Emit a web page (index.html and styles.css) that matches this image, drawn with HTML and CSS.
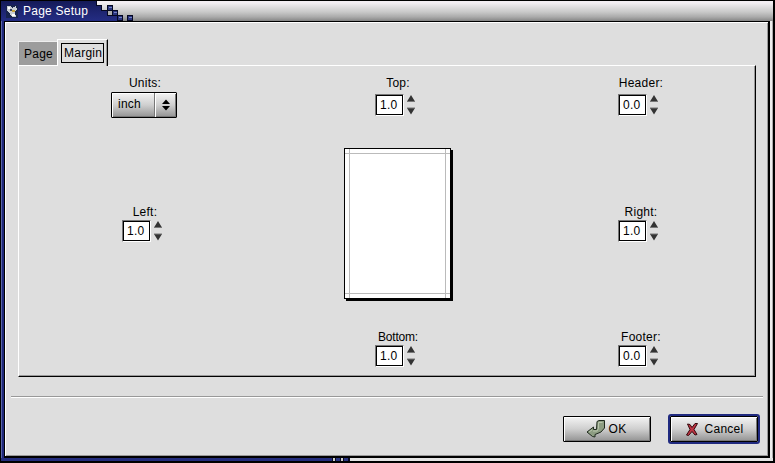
FILE: index.html
```html
<!DOCTYPE html>
<html lang="en">
<head>
<meta charset="utf-8">
<title>Page Setup</title>
<link rel="stylesheet" href="styles.css">
</head>
<body>
<svg class="defs" width="0" height="0" aria-hidden="true">
  <symbol id="arrows" viewBox="0 0 8 20">
    <path d="M4 0L8 6.500H0zM0 13H8L4 19.500z" fill="#333"/>
    <path d="M0 6.500H8M0 13H8" stroke="#777" stroke-width="1"/>
  </symbol>
</svg>
<div class="window">
  <header class="titlebar">
    <svg class="titleart" width="140" height="20" viewBox="1 1 140 20" shape-rendering="crispEdges">
      <defs><linearGradient id="blue" x1="0" y1="0" x2="0" y2="1"><stop offset="0" stop-color="#141a58"/><stop offset=".5" stop-color="#1d2470"/><stop offset="1" stop-color="#242d83"/></linearGradient></defs>
      <path d="M1 1H96V5H101V10H107V15H117V21H1z" fill="url(#blue)"/>
      <path d="M96.500 1V5.500H101.500V10.500H107.500V15.500H117.500V21" fill="none" stroke="#050822"/>
      <path d="M107.500 10.500h5v5h-5z" fill="#aaa" stroke="#050822"/>
      <g fill="#29347f" stroke="#050822">
        <path d="M107.500 5.500h5v5h-5zM112.500 10.500h5v5h-5zM117.500 15.500h5v5h-5zM127.500 15.500h5v5h-5z"/>
      </g>
      <path d="M109 7.500h3M114 12.500h3M119 17.500h3M129 17.500h3" stroke="#7783c0"/>
      <path d="M6 5H18V18H6z" fill="#17234e"/>
      <path d="M7 6h4l1 2 4-2 1 3-2 3 1 5h-4l-2-3-3-3z" fill="#c9ced3"/>
      <path d="M8 7h2v2H8zM12 14h3v2h-3z" fill="#fff"/><path d="M12 10h3v2h-3z" fill="#c5a33e"/><path d="M10 9h2v2h-2z" fill="#39435d"/>
    </svg>
    <span class="title">Page Setup</span>
  </header>
  <main class="client">
    <nav class="tabs"><div class="tab">Page</div><div class="tab active"><span>Margin</span></div></nav>
    <section class="panel">
      <div class="column units">
        <div class="field top"><label>Units:</label>
          <button class="select"><span>inch</span><svg width="20" height="22" viewBox="0 0 20 22"><path d="M6 10L10 5.500 14 10zM6 12H14L10 16.500z" fill="#000"/></svg></button>
        </div>
        <div class="field middle"><label>Left:</label><div class="spin"><span>1.0</span><svg width="8" height="20"><use href="#arrows"/></svg></div></div>
      </div>
      <div class="column center">
        <div class="field first"><label>Top:</label><div class="spin"><span>1.0</span><svg width="8" height="20"><use href="#arrows"/></svg></div></div>
        <div class="paper"><div class="guides"></div></div>
        <div class="field"><label class="bottom">Bottom:</label><div class="spin"><span>1.0</span><svg width="8" height="20"><use href="#arrows"/></svg></div></div>
      </div>
      <div class="column right">
        <div class="field top"><label>Header:</label><div class="spin"><span>0.0</span><svg width="8" height="20"><use href="#arrows"/></svg></div></div>
        <div class="field middle"><label>Right:</label><div class="spin"><span>1.0</span><svg width="8" height="20"><use href="#arrows"/></svg></div></div>
        <div class="field"><label>Footer:</label><div class="spin"><span>0.0</span><svg width="8" height="20"><use href="#arrows"/></svg></div></div>
      </div>
    </section>
    <hr>
    <footer class="actions">
      <button class="button ok"><svg width="20" height="18" viewBox="0 0 20 18"><path d="M11 1.500L13 .5H18.500V8L15 12 9 14.500V17L6.500 16.500 1 12 7.500 7V9.500H10.500z" fill="#8d9d82" stroke="#1f2a1d"/><path d="M12.500 2.500h4M12.500 2.500v6L11 11H7M3 12l3-2" fill="none" stroke="#b9c6ad"/></svg><span>OK</span></button>
      <span class="default"><button class="button"><svg width="14" height="15" viewBox="0 0 14 15"><path d="M2.500 2L5 2.500 7 5.500 10 1.500 12.500 1.500 9 7.500 12 12.500 10 13 7 9.500 3.500 13.500 1.500 13 5 7.500z" fill="#bd3442" stroke="#35090d"/></svg><span>Cancel</span></button></span>
    </footer>
  </main>
  <div class="bottom-edge"><svg width="18" height="3" shape-rendering="crispEdges"><path d="M0 0h18v3H0z" fill="#080a20"/><path d="M1 0h2v3H1zM9 0h2v3H9z" fill="#ccc"/><path d="M4 0h4v3H4zM12 0h4v3h-4z" fill="#29347f"/></svg></div>
</div>
</body>
</html>
```
FILE: styles.css
```css
* { box-sizing: border-box; }
body { margin: 0; font: 12px/14px "Liberation Sans", Arial, sans-serif; color: #000; letter-spacing: .25px; }
.defs { position: absolute; }
.window {
  width: 775px; height: 463px; display: flex; flex-direction: column;
  border: 1px solid #000; border-width: 1px 2px 2px 1px;
  background: linear-gradient(90deg, #5a66a8 0 1px, #20287a 1px 3px, #000 3px 4px, #ddd 4px 768px, #000 768px 769px, #eee 769px 771px, #aaa 771px);
}
.titlebar {
  height: 20px; flex: none; position: relative;
  background: linear-gradient(#f3eef3 0 2px, #e8e5e8 4px, #c9c9c9 11px, #aaa 16px, #858585);
}
.titleart { display: block; }
.title { position: absolute; left: 22px; top: 3px; color: #fff; letter-spacing: .25px; }
.client {
  flex: none; height: 437px; margin: 0 3px 0 3px; padding: 17px 0 0 12px;
  display: flex; flex-direction: column; background: #dedede;
  border: solid #000; border-width: 1px 2px 2px 1px;
  box-shadow: inset 1px 1px #fff, inset -1px -1px #999;
}
.tabs { display: flex; align-items: flex-end; height: 26px; padding-left: 1px; }
.tab { width: 39px; height: 24px; padding: 5px 0 0 5px; background: #9c9c9c; border-top: 1px solid #eee; border-left: 1px solid #eee; }
.tab.active { width: 51px; height: 27px; margin-bottom: -1px; background: #dedede; border: 1px solid #fff; border-right-color: #000; border-bottom: 0; padding: 3px 0 0 3px; position: relative; box-shadow: inset -1px 0 #999; }
.tab.active span { display: block; width: 43px; height: 20px; border: 1px solid #000; padding: 2px 0 0 2px; }
.panel {
  display: flex; margin-left: 1px; width: 738px; height: 312px;
  border: solid; border-width: 1px; border-color: #fff #000 #000 #fff; box-shadow: inset -1px -1px #999;
}
.column { padding-top: 10px; display: flex; flex-direction: column; align-items: center; width: 250px; }
.column.center { width: 256px; }
.column.right { width: 230px; }
.field { display: flex; flex-direction: column; align-items: center; gap: 1px; height: 40px; }
.field.top { height: 129px; gap: 4px; }
.field.first { gap: 4px; }
.field.middle { height: 125px; }
.field label { height: 14px; padding-left: 2px; }
.field .bottom { letter-spacing: -.2px; }
.spin { display: flex; gap: 3px; align-items: center; margin-right: 4px; }
.spin > span { width: 29px; height: 22px; padding: 3px 0 0 4px; background: #fff; border: 1px solid; border-color: #777 #fff #fff #777; box-shadow: inset 0 0 0 1px #000; }
button { font: inherit; letter-spacing: inherit; color: #000; padding: 0; margin: 0; border: 1px solid #000; border-radius: 1px; background: linear-gradient(#f3f3f3, #cfcfcf 50%, #939393); box-shadow: inset 1px 1px #fff, inset -1px -1px #777; }
.select { display: flex; width: 66px; height: 26px; margin-top: -2px; }
.select span { width: 43px; height: 24px; padding: 4px 0 0 6px; text-align: left; border-right: 1px solid #777; box-shadow: 1px 0 #fff; }
.select svg { margin: 1px 0 0 1px; }
.paper { width: 107px; height: 151px; margin: 32px 0 31px; border: 1px solid #000; background: #fff; box-shadow: 2px 2px #000; }
.guides { width: 105px; height: 149px; background: linear-gradient(#bbb, #bbb) 4px 0/1px 100% no-repeat, linear-gradient(#bbb, #bbb) 100px 0/1px 100% no-repeat, linear-gradient(#bbb, #bbb) 0 4px/100% 1px no-repeat, linear-gradient(#bbb, #bbb) 0 144px/100% 1px no-repeat; }
hr { width: 752px; margin: 19px 0 0 -6px; border: 0; border-top: 1px solid #999; border-bottom: 1px solid #fff; }
.actions { display: flex; justify-content: flex-end; align-items: center; gap: 17px; padding-right: 8px; margin-top: 16px; height: 30px; }
.button { display: flex; align-items: center; justify-content: center; width: 88px; height: 26px; gap: 3px; }
.button.ok { padding-right: 2px; }
.default { border: 2px solid #202a80; border-radius: 3px; }
.default .button { gap: 6px; }
.bottom-edge { height: 3px; flex: none; display: flex; padding-left: 331px; background: linear-gradient(90deg, #232c7c 331px, #e3e3e3 331px); }
```
